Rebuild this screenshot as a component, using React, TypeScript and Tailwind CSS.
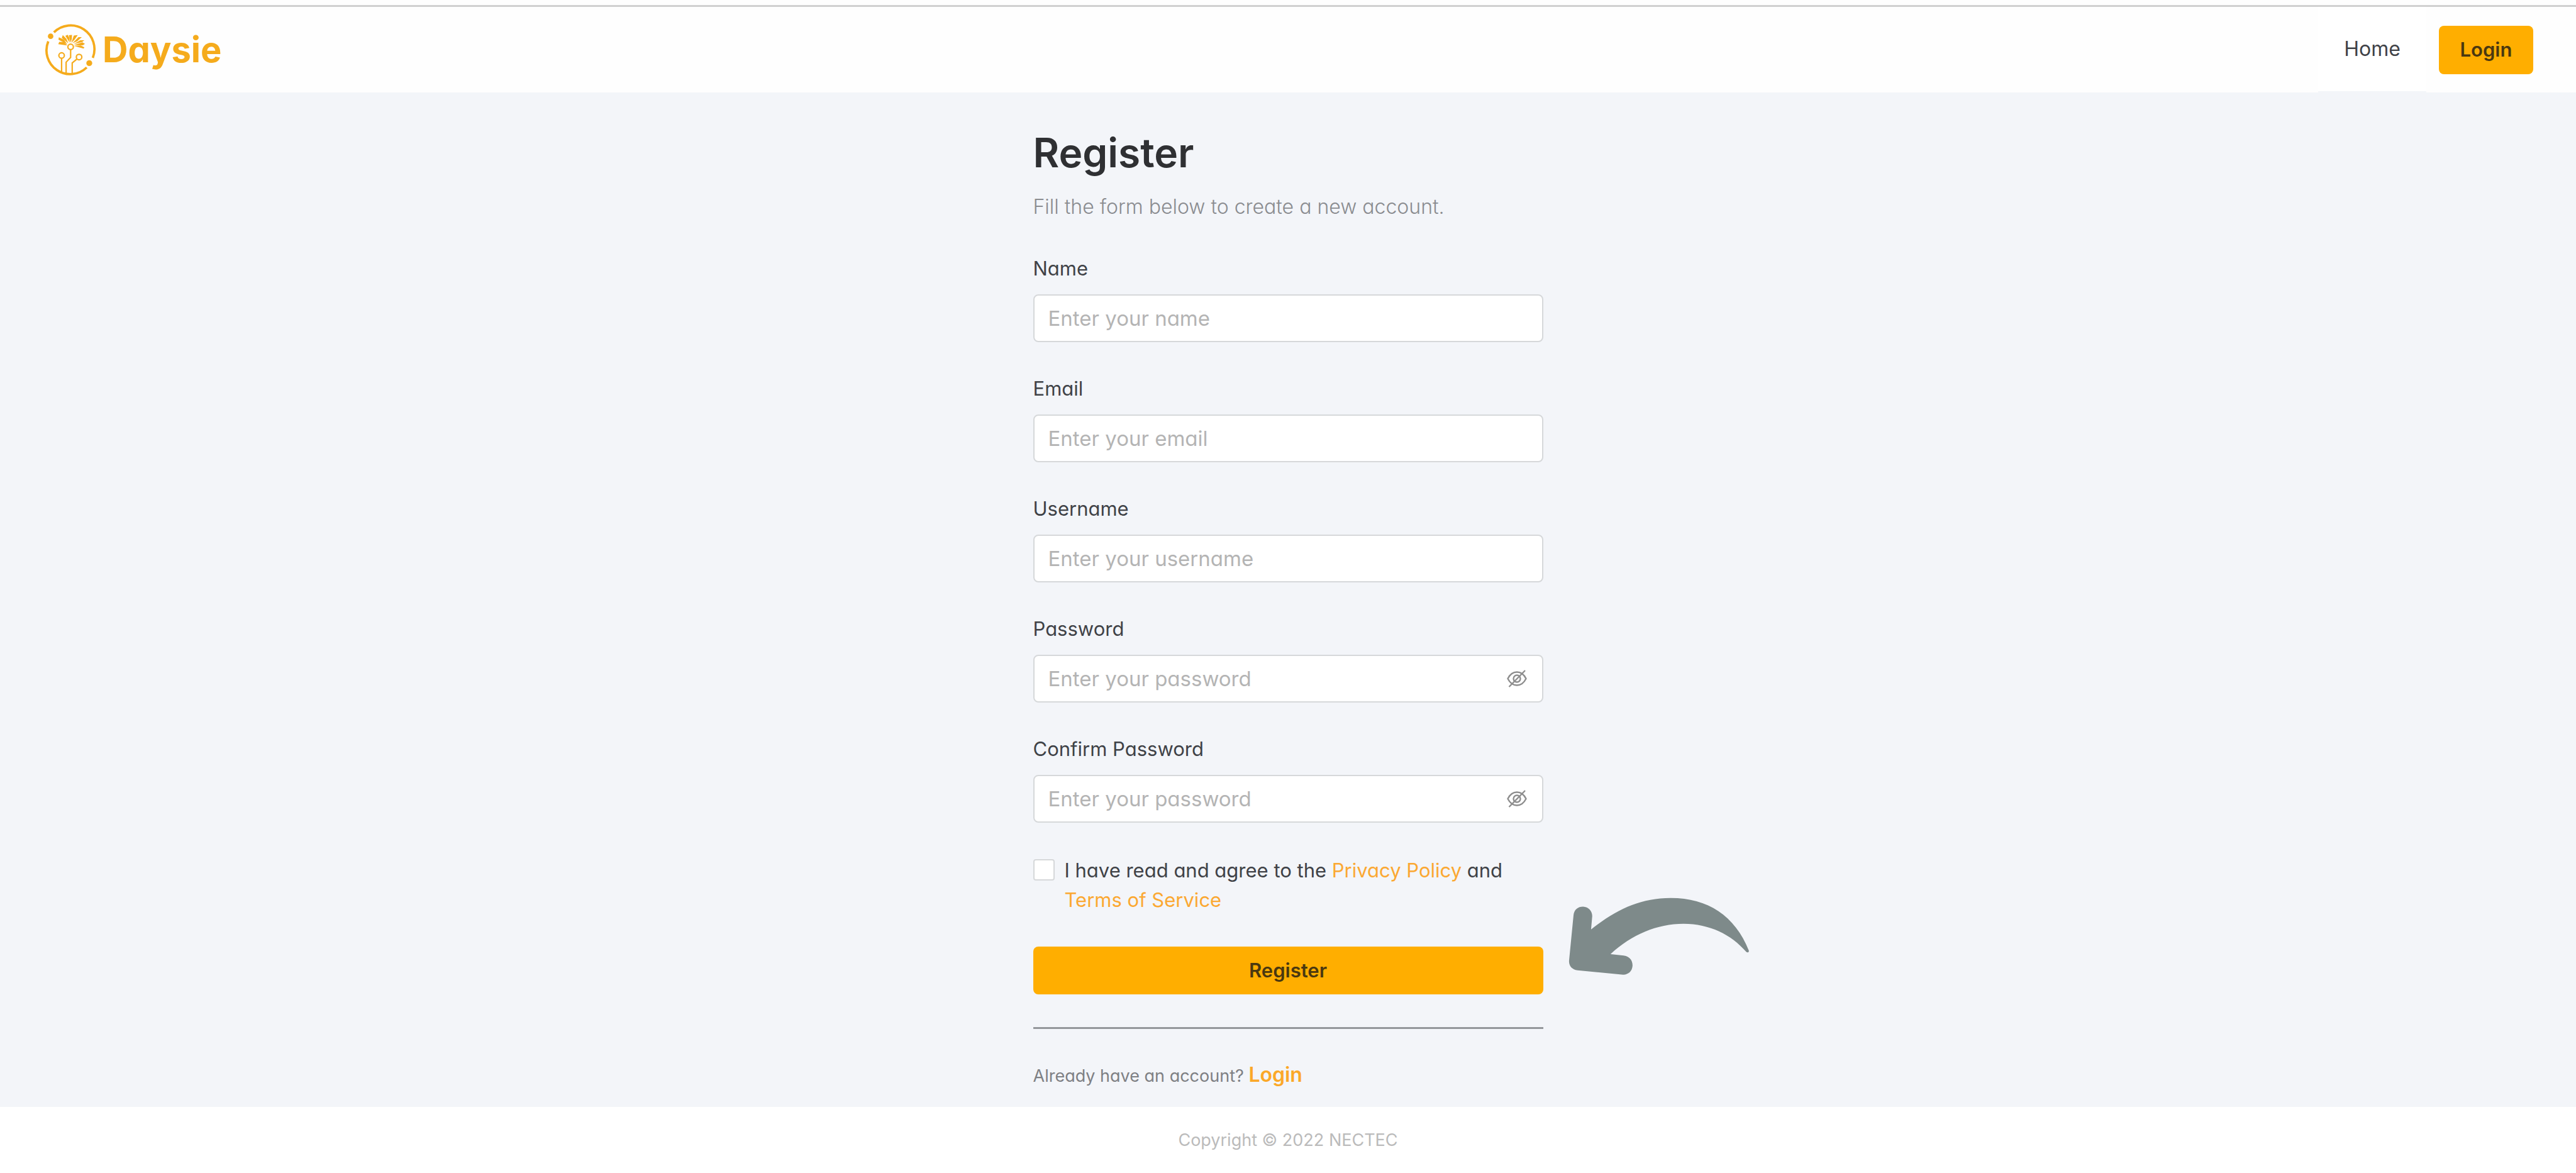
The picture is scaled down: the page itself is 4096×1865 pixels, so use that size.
import { useState } from "react";

interface FieldProps {
  id: string;
  label: string;
  placeholder: string;
  type?: 'text' | 'email' | 'password';
}

const Logo = () => (
  <svg viewBox="48 123 262 266" className="h-[83px] w-[82px]" fill="none" stroke="#f5ab1c" aria-hidden="true">
    <path d="M95 166A121 121 0 0 1 293 296" strokeWidth="12" />
    <path d="M262 345A121 121 0 0 1 66 212" strokeWidth="12" />
    <g fill="#f5ab1c" stroke="none">
      <circle cx="78" cy="186" r="14" />
      <circle cx="275" cy="323" r="15" />
      {/* petals */}
      <path d="M163 233L117 226L122 214L145 216Z" />
      <path d="M163 228L118 203L120 191L146 203Z" />
      <path d="M168 222L135 194L140 180L158 198Z" />
      <path d="M175 218L153 184L165 178L174 195Z" />
      <path d="M180 218L171 181L187 179L186 200Z" />
      <path d="M184 219L196 182L216 180L201 202Z" />
      <path d="M190 221L220 190L237 190L213 212Z" />
      <path d="M195 226L229 206L250 206L239 215Z" />
      <path d="M197 231L240 217L253 225L242 232Z" />
      <path d="M197 235L232 233L250 242L246 249Z" />
    </g>
    {/* stems */}
    <g strokeWidth="7">
      <circle cx="180" cy="240" r="14" fill="#fff" />
      <circle cx="134" cy="284" r="14" />
      <circle cx="223" cy="292" r="14" />
      <path d="M134 298V366" />
      <path d="M180 254V294L157 318V374" />
      <path d="M212 302L188 322V374" />
    </g>
  </svg>
);

const EyeOff = () => (
  <svg viewBox="0 0 32 28" className="h-[28px] w-[32px]" fill="none" stroke="#8e8e8e" strokeWidth="2.4" aria-hidden="true">
    <path d="M1.5 14C5 7 10 3.500 16 3.500S27 7 30.500 14C27 21 22 24.500 16 24.500S5 21 1.500 14Z" />
    <circle cx="16" cy="14" r="5.500" />
    <path d="M3.500 27L29 1" />
  </svg>
);

const Arrow = () => (
  <svg
    viewBox="110 90 940 410"
    className="pointer-events-none absolute -top-20 left-full ml-[38px] h-[127px] w-[292px]"
    fill="#7e8a8a"
    aria-hidden="true"
  >
    <path d="M141 187C144 158 164 143 190 143C217 144 237 164 237 192L231 260C360 160 480 99 640 99C830 99 970 190 1041 369C1042 378 1034 380 1028 376C950 285 840 232 706 231C570 232 440 285 331 387L398 394C427 397 444 418 444 446C442 474 424 492 396 493L162 470C134 467 117 448 118 422Z" />
  </svg>
);

const Field = ({ id, label, placeholder, type = 'text' }: FieldProps) => {
  const [visible, setVisible] = useState(false);
  const isPassword = type === 'password';

  return (
    <div>
      <label htmlFor={id} className="block text-[31px] leading-10 text-[#3f4247]">
        {label}
      </label>
      <div className="relative mt-[21px]">
        <input
          id={id}
          type={isPassword && visible ? 'text' : type}
          placeholder={placeholder}
          className="block h-[76px] w-full rounded-lg border-2 border-[#d6d8da] bg-white px-[22px] text-[33px] text-[#3f4247] placeholder:text-[#b4b4b4]"
        />
        {isPassword && (
          <button
            type="button"
            onClick={() => setVisible(!visible)}
            aria-label="Toggle password visibility"
            className="absolute inset-y-0 right-[26px] flex items-center"
          >
            <EyeOff />
          </button>
        )}
      </div>
    </div>
  );
};

const App = () => {
  return (
    <div className="flex min-h-screen flex-col bg-[#f3f5f9] font-['Inter','Open_Sans',sans-serif] [font-feature-settings:'cv11']">
      <div className="bg-[#fefefe] pt-2">
        <header className="flex h-[139px] items-center justify-between border-t-3 border-[#d0d0d0] pr-[68px] pl-[71px]">
          <a href="#" className="flex items-center gap-[10px] text-[#f5ab1c]">
            <Logo />
            <span className="text-[56px] leading-[72px] font-bold">Daysie</span>
          </a>
          <nav className="flex h-full items-center gap-5">
            <a
              href="#"
              className="flex h-full w-[172px] items-center justify-center border-b-2 border-[#f3f5f9] bg-white text-[32px] text-[#3f4247]"
            >
              Home
            </a>
            <button className="h-[77px] w-[150px] rounded-lg bg-[#ffae00] text-[31px] font-semibold text-[#4a3810]">
              Login
            </button>
          </nav>
        </header>
      </div>

      <main className="mx-auto w-[811px] max-w-full flex-1 pt-[60px] pb-[28px]">
        <h1 className="text-[64px] leading-[72px] font-semibold text-[#2f3033]">Register</h1>
        <p className="mt-[26px] text-[32px] leading-[48px] font-light text-[#8a8c90]">
          Fill the form below to create a new account.
        </p>

        <form className="mt-[54px]" onSubmit={(e) => e.preventDefault()}>
          <div className="flex flex-col gap-[54px]">
            <Field id="name" label="Name" placeholder="Enter your name" />
            <Field id="email" label="Email" placeholder="Enter your email" type="email" />
            <Field id="username" label="Username" placeholder="Enter your username" />
            <Field id="password" label="Password" placeholder="Enter your password" type="password" />
            <Field id="confirm" label="Confirm Password" placeholder="Enter your password" type="password" />
          </div>

          <div className="mt-[52px] flex items-start gap-4">
            <input
              id="agree"
              type="checkbox"
              className="mt-[6px] size-[34px] shrink-0 appearance-none rounded-sm border-2 border-[#d6d8da] bg-white checked:bg-[#ffae00]"
            />
            <label htmlFor="agree" className="text-[31px] leading-[47px] text-[#3f4247]">
              I have read and agree to the <a href="#" className="text-[#fba832]">Privacy Policy</a> and
              <br />
              <a href="#" className="text-[#fba832]">Terms of Service</a>
            </label>
          </div>

          <div className="relative mt-[51px]">
            <button type="submit" className="h-[76px] w-full rounded-lg bg-[#ffae00] text-[31px] font-semibold text-[#4a3810]">
              Register
            </button>
            <Arrow />
          </div>
        </form>

        <hr className="mt-[52px] border-t-3 border-[#94979b]" />
        <p className="mt-[55px] text-[27px] leading-10 text-[#7e8084]">
          Already have an account? <a href="#" className="text-[32px] leading-8 font-semibold text-[#fba828]">Login</a>
        </p>
      </main>

      <footer className="bg-white py-8 text-center text-[27px] leading-[41px] text-[#bbbbbb]">
        Copyright © 2022 NECTEC
      </footer>
    </div>
  );
};

export default App;
